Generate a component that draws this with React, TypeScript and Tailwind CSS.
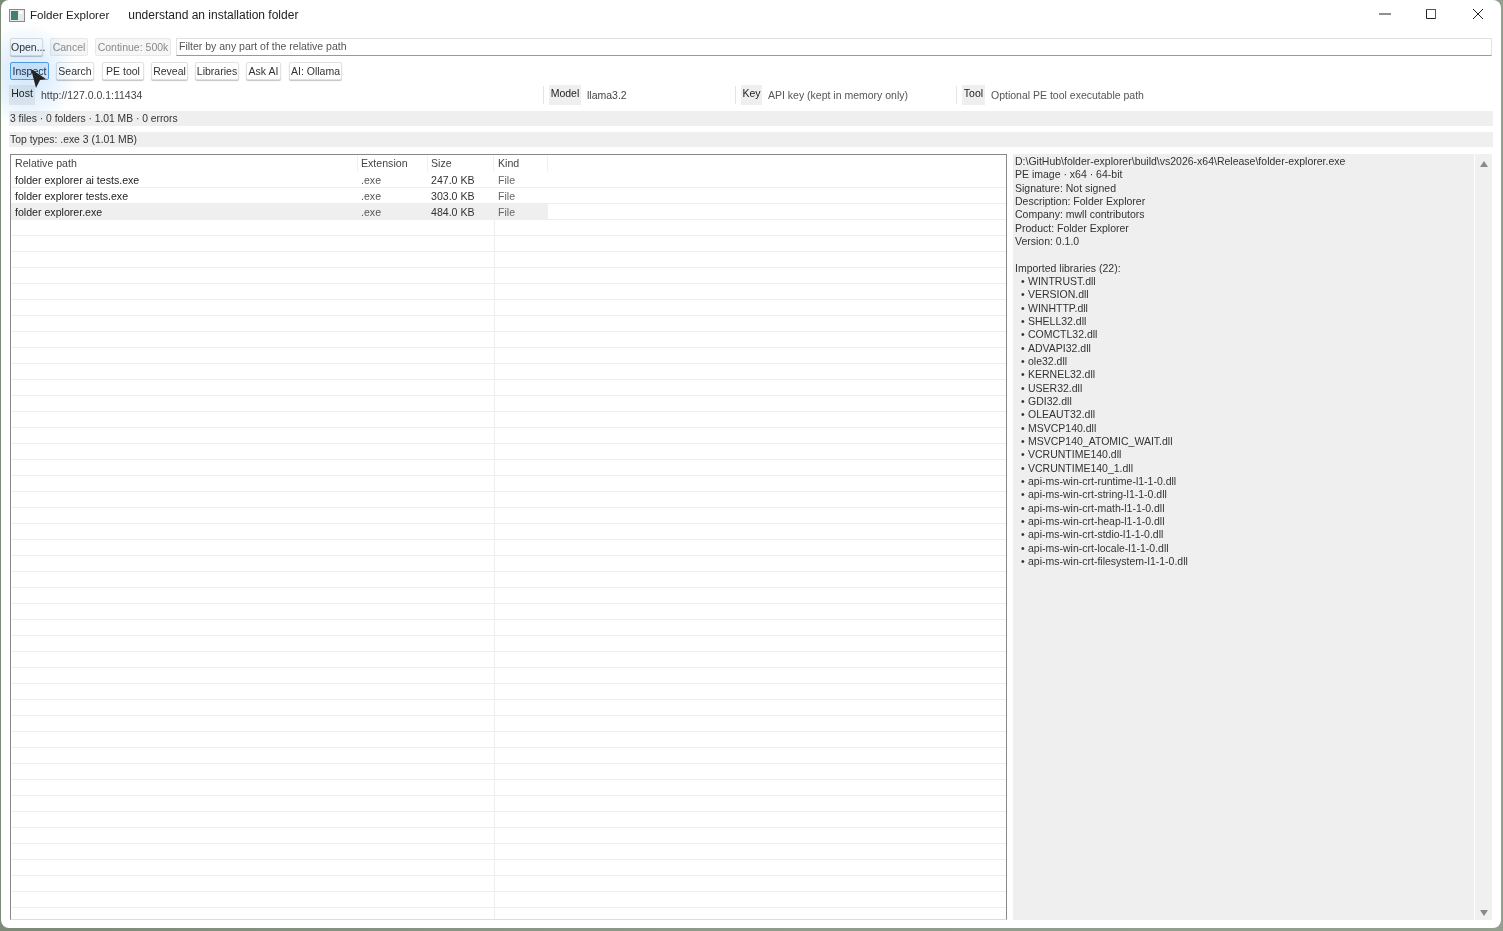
const files = [
  { path: "folder explorer ai tests.exe", ext: ".exe", size: "247.0 KB", kind: "File" },
  { path: "folder explorer tests.exe", ext: ".exe", size: "303.0 KB", kind: "File" },
  { path: "folder explorer.exe", ext: ".exe", size: "484.0 KB", kind: "File" },
];

const details = [
  "D:\\GitHub\\folder-explorer\\build\\vs2026-x64\\Release\\folder-explorer.exe",
  "PE image · x64 · 64-bit",
  "Signature: Not signed",
  "Description: Folder Explorer",
  "Company: mwll contributors",
  "Product: Folder Explorer",
  "Version: 0.1.0",
  "",
  "Imported libraries (22):",
];

const libraries = [
  "WINTRUST.dll",
  "VERSION.dll",
  "WINHTTP.dll",
  "SHELL32.dll",
  "COMCTL32.dll",
  "ADVAPI32.dll",
  "ole32.dll",
  "KERNEL32.dll",
  "USER32.dll",
  "GDI32.dll",
  "OLEAUT32.dll",
  "MSVCP140.dll",
  "MSVCP140_ATOMIC_WAIT.dll",
  "VCRUNTIME140.dll",
  "VCRUNTIME140_1.dll",
  "api-ms-win-crt-runtime-l1-1-0.dll",
  "api-ms-win-crt-string-l1-1-0.dll",
  "api-ms-win-crt-math-l1-1-0.dll",
  "api-ms-win-crt-heap-l1-1-0.dll",
  "api-ms-win-crt-stdio-l1-1-0.dll",
  "api-ms-win-crt-locale-l1-1-0.dll",
  "api-ms-win-crt-filesystem-l1-1-0.dll",
];

const emptyRows = Array.from({ length: 44 }, (_, i) => i);

function ToolButton({ label, className }: { label: string; className: string }) {
  return (
    <button className={`h-[18px] shrink-0 whitespace-nowrap rounded-[2px] border border-[#e2e2e2] bg-white px-0 text-center text-[10.5px] leading-[15px] text-[#333] shadow-[0_1px_1px_#c4c4c4] ${className}`}>
      {label}
    </button>
  );
}

function FieldLabel({ label, className }: { label: string; className: string }) {
  return (
    <div className={`h-5 shrink-0 bg-[#efefef] pt-[1px] text-center text-[10.5px] leading-[14px] text-[#222] ${className}`}>
      {label}
    </div>
  );
}

export default function App() {
  return (
    <div className="h-[931px] w-[1503px] overflow-hidden bg-[linear-gradient(90deg,#7d8a78,#8f9c8c_50%,#93a08f)] font-['Liberation_Sans',Arial,sans-serif]">
      <div className="relative ml-[1px] flex h-[928px] w-[1500px] flex-col overflow-hidden rounded-[8px] bg-white">
        {/* title bar */}
        <div className="flex h-[30px] shrink-0 items-center">
          <svg className="ml-[8px] h-[13px] w-[16px]" viewBox="0 0 16 13">
            <rect x="0.5" y="0.5" width="15" height="12" fill="#e8e8e8" stroke="#8a8a8a" />
            <rect x="2" y="2" width="7" height="9" fill="#3f7f78" />
            <rect x="10.5" y="2" width="3" height="3" fill="#fff" />
          </svg>
          <span className="ml-[5px] text-[11.6px] text-[#222]">Folder Explorer</span>
          <span className="ml-[19px] text-[12px] text-[#222]">understand an installation folder</span>
          <div className="mb-[2px] ml-auto flex items-center">
            <svg className="mr-[35px] h-[10px] w-[12px]" viewBox="0 0 12 10"><path d="M0 5h12" stroke="#222" strokeWidth="1" /></svg>
            <svg className="mr-[37px] h-[10px] w-[10px]" viewBox="0 0 10 10"><path d="M.5.5h9v9h-9z" fill="none" stroke="#222" strokeWidth="1" /><path d="M1 .5h9M9.5 0v9" stroke="#555" strokeWidth="1" /></svg>
            <svg className="mr-[18px] h-[10px] w-[10px]" viewBox="0 0 10 10"><path d="M0 0l10 10M10 0L0 10" stroke="#222" strokeWidth="1" /></svg>
          </div>
        </div>

        {/* open / filter row */}
        <div className="mt-[8px] flex h-[18px] shrink-0 items-center pl-[9px]">
          <ToolButton label="Open..." className="w-[33px] bg-[#f6fbff] text-[#123]" />
          <button className="ml-[7px] h-[18px] w-[38px] whitespace-nowrap rounded-[2px] border border-[#e8e8e8] bg-[#f6f6f6] text-[10.5px] leading-[15px] text-[#8a8a8a]">Cancel</button>
          <button className="ml-[7px] h-[18px] w-[76px] whitespace-nowrap rounded-[2px] border border-[#e8e8e8] bg-[#f6f6f6] text-[10.5px] leading-[15px] text-[#8a8a8a]">Continue: 500k</button>
          <div className="ml-[5px] flex h-[18px] w-[1316px] items-center border border-[#e2e2e2] border-b-[#999] pl-[2px] text-[10.5px] text-[#555]">
            Filter by any part of the relative path
          </div>
        </div>

        {/* actions row */}
        <div className="mt-[6px] flex h-[18px] shrink-0 items-center pl-[9px]">
          <button className="h-[18px] w-[39px] shrink-0 rounded-[2px] border border-[#5aa5e2] bg-[#e4f1fc] text-[10.5px] leading-[15px] text-[#234]">Inspect</button>
          <ToolButton label="Search" className="ml-[7px] w-[38px]" />
          <ToolButton label="PE tool" className="ml-[8px] w-[42px]" />
          <ToolButton label="Reveal" className="ml-[7px] w-[37px]" />
          <ToolButton label="Libraries" className="ml-[7px] w-[44px]" />
          <ToolButton label="Ask AI" className="ml-[7px] w-[35px]" />
          <ToolButton label="AI: Ollama" className="ml-[8px] w-[53px]" />
        </div>

        {/* connection row */}
        <div className="mt-[5px] flex h-5 shrink-0 items-center pl-[8px] text-[10.5px] text-[#444]">
          <FieldLabel label="Host" className="w-[26px] bg-[#e6f1fb]" />
          <span className="ml-[6px] mt-[2px] w-[502px] shrink-0">http://127.0.0.1:11434</span>
          <div className="h-[18px] w-px shrink-0 bg-[#e4e4e4]" />
          <FieldLabel label="Model" className="ml-[5px] w-[32px]" />
          <span className="ml-[6px] mt-[2px] w-[148px] shrink-0">llama3.2</span>
          <div className="h-[18px] w-px shrink-0 bg-[#e4e4e4]" />
          <FieldLabel label="Key" className="ml-[5px] w-[21px]" />
          <span className="ml-[6px] mt-[2px] w-[188px] shrink-0 text-[#555]">API key (kept in memory only)</span>
          <div className="h-[18px] w-px shrink-0 bg-[#e4e4e4]" />
          <FieldLabel label="Tool" className="ml-[5px] w-[23px]" />
          <span className="ml-[6px] mt-[2px] text-[#555]">Optional PE tool executable path</span>
        </div>

        {/* status lines */}
        <div className="ml-[8px] mt-[6px] h-[15px] w-[1484px] shrink-0 bg-[#efefef] pl-[1px] text-[10.3px] leading-[15px] text-[#333]">
          3 files · 0 folders · 1.01 MB · 0 errors
        </div>
        <div className="ml-[8px] mt-[6px] h-[15px] w-[1484px] shrink-0 bg-[#efefef] pl-[1px] text-[10.4px] leading-[15px] text-[#333]">
          Top types: .exe 3 (1.01 MB)
        </div>

        {/* main area */}
        <div className="mt-[7px] flex min-h-0 flex-1 pb-[8px] pl-[9px]">
          <div className="flex w-[997px] shrink-0 flex-col overflow-hidden border-t border-r border-b border-l border-t-[#888] border-r-[#888] border-b-[#ddd] border-l-[#888] text-[10.6px] text-[#333]">
            <div className="flex h-[17px] shrink-0 text-[10.6px] leading-[16px] text-[#444]">
              <div className="w-[347px] border-r border-[#f0f0f0] pl-[4px]">Relative path</div>
              <div className="w-[70px] border-r border-[#f0f0f0] pl-[3px]">Extension</div>
              <div className="w-[66px] border-r border-[#f0f0f0] pl-[3px]">Size</div>
              <div className="w-[54px] border-r border-[#f0f0f0] pl-[4px]">Kind</div>
            </div>
            {files.map((file, i) => (
              <div key={file.path} className="flex h-[16px] shrink-0 border-b border-[#eeeeee] leading-[16px]">
                <div className={`flex w-[537px] ${i === 2 ? "bg-[#efefef]" : ""}`}>
                  <div className="w-[347px] pl-[4px] text-[#222]">{file.path}</div>
                  <div className="w-[70px] pl-[3px] text-[#555]">{file.ext}</div>
                  <div className="w-[66px] pl-[3px]">{file.size}</div>
                  <div className="w-[54px] pl-[4px] text-[#666]">{file.kind}</div>
                </div>
              </div>
            ))}
            {emptyRows.map((row) => (
              <div key={row} className="flex h-[16px] shrink-0 border-b border-[#eeeeee]">
                <div className="h-full w-[484px] border-r border-[#eeeeee]" />
              </div>
            ))}
          </div>

          {/* inspector */}
          <div className="ml-[6px] flex w-[479px] shrink-0">
            <div className="w-[461px] shrink-0 bg-[#efefef] pl-[2px] pt-[1px] text-[10.5px] leading-[13.33px] text-[#333]">
              {details.map((line, i) => (
                <div key={i} className="h-[13.33px] whitespace-pre">{line}</div>
              ))}
              {libraries.map((lib) => (
                <div key={lib} className="flex h-[13.33px] whitespace-pre">
                  <span className="w-[13px] pl-[6px]">•</span>
                  <span>{lib}</span>
                </div>
              ))}
            </div>
            <div className="ml-px flex flex-1 flex-col items-center justify-between bg-[#f0f0f0] pb-[4px] pt-[7px]">
              <svg className="h-[6px] w-[8px]" viewBox="0 0 8 6"><path d="M4 0l4 6H0z" fill="#8a8a8a" /></svg>
              <svg className="h-[6px] w-[8px]" viewBox="0 0 8 6"><path d="M0 0h8L4 6z" fill="#8a8a8a" /></svg>
            </div>
          </div>
        </div>

        {/* click glow and pointer */}
        <div className="pointer-events-none absolute left-[-30px] top-[25px] h-[100px] w-[110px] bg-[radial-gradient(circle,#d4e8fb_0%,#e8f3fd_40%,#ffffff_70%)] mix-blend-multiply" />
        <svg className="pointer-events-none absolute left-[29px] top-[69px] h-[20px] w-[17px]" viewBox="0 0 17 20">
          <path d="M1 0l15 10-6 1-4 8z" fill="#222" />
        </svg>
      </div>
    </div>
  );
}
